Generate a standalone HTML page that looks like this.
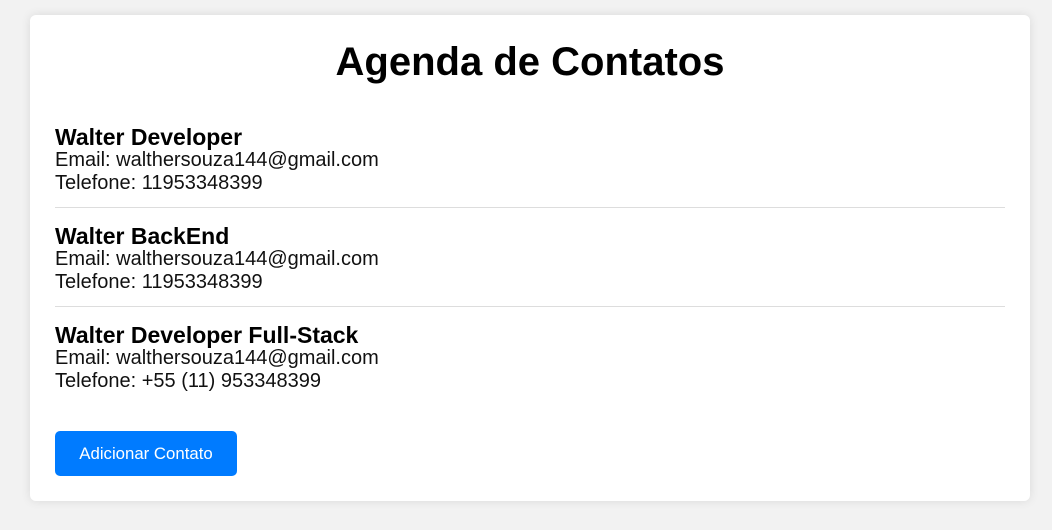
<!DOCTYPE html>
<html><head><meta charset="utf-8"><style>
html,body{margin:0;padding:0;background:#f2f2f2;font-family:"Liberation Sans",Arial,sans-serif;}
.card{position:absolute;left:30px;top:15px;width:1000px;height:486px;box-sizing:border-box;background:#fff;border-radius:6px;box-shadow:0 0 10px rgba(0,0,0,0.1);padding:20px 25px 25px;}
h1{margin:4px 0 24px;font-size:40px;line-height:46px;text-align:center;color:#000;}
.item{padding:17px 0 12px;border-bottom:1px solid #ddd;font-size:20px;line-height:23px;color:#111;}
.item:last-of-type{border-bottom:none;padding-bottom:14px;}
.item b{font-size:23px;display:block;color:#000;line-height:22px;margin-bottom:1px;}
button{margin-top:24px;width:182px;height:45px;background:#007bff;color:#fff;border:none;border-radius:5px;font-size:16.8px;font-family:"Liberation Sans",Arial,sans-serif;}
</style></head><body>
<div class="card">
<h1>Agenda de Contatos</h1>
<div class="item"><b>Walter Developer</b>Email: walthersouza144@gmail.com<br>Telefone: 11953348399</div>
<div class="item"><b>Walter BackEnd</b>Email: walthersouza144@gmail.com<br>Telefone: 11953348399</div>
<div class="item"><b>Walter Developer Full-Stack</b>Email: walthersouza144@gmail.com<br>Telefone: +55 (11) 953348399</div>
<button>Adicionar Contato</button>
</div>
</body></html>
